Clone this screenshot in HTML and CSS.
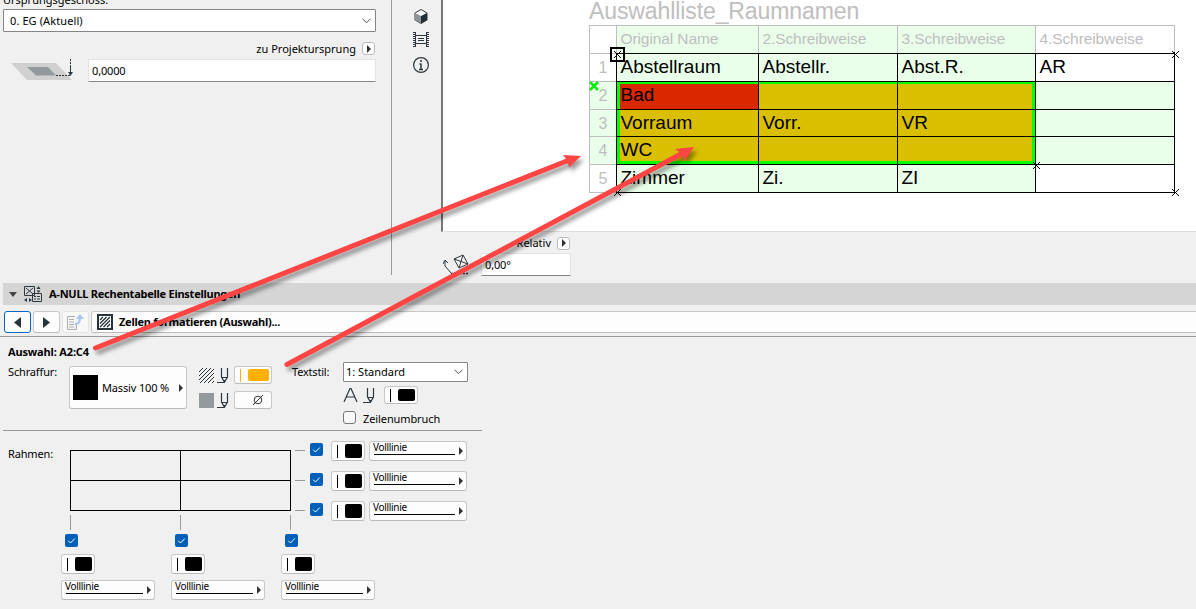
FILE: index.html
```
<!DOCTYPE html>
<html lang="de">
<head>
    <meta charset="UTF-8">
    <meta name="viewport" content="width=device-width, initial-scale=1.0">
    <title>A-NULL Rechentabelle</title>
    <link rel="stylesheet" href="styles.css">
</head>
<body>
    <!-- Shared icons -->
    <svg class="symbols">
        <symbol id="pen" viewBox="0 0 12 17">
            <path d="M4.5 1v9l3 5 3-5V1M4.5 10.500h6M0 15.500h7.500" fill="none" stroke="#2d383e" stroke-width="1.200"/>
            <path d="M6 13h3l-1.500 2.500z" fill="#2d383e"/>
        </symbol>
        <symbol id="check" viewBox="0 0 13 13">
            <path d="M3.200 6.700l2.300 2.300 4.300-4.500" fill="none" stroke="#fff" stroke-width="1"/>
        </symbol>
        <symbol id="chevron" viewBox="0 0 9 6">
            <path d="M.5.700l4 4 4-4" fill="none" stroke="#555" stroke-width="1"/>
        </symbol>
    </svg>

    <div class="top">
        <section class="origin">
            <label class="origin-label">Ursprungsgeschoss:</label>
            <div class="select origin-select"><span>0. EG (Aktuell)</span><svg class="chevron"><use href="#chevron"/></svg></div>
            <div class="origin-link"><span>zu Projektursprung</span><button class="mini"></button></div>
            <div class="origin-height">
                <svg width="64" height="24" viewBox="0 0 64 24">
                    <path d="M0 4h45l16 17H16z" fill="#d0d0d0"/>
                    <path d="M16 8h21l8 8.500H25z" fill="#939a9e"/>
                    <path d="M45 16.500h14M59.500 0v6" stroke="#2d383e" stroke-dasharray="2 1" fill="none"/>
                    <path d="M59.500 6v8" stroke="#2d383e"/>
                    <path d="M57 13h5l-2.500 4z" fill="#2d383e"/>
                </svg>
                <div class="field height-field">0,0000</div>
            </div>
        </section>

        <aside class="tools">
            <svg width="14" height="15" viewBox="0 0 14 15">
                <path d="M7 .5l6 3.500v7l-6 3.500L1 11V4z" fill="#fff" stroke="#2d383e"/>
                <path d="M1 4l6 3v7.500L1 11z" fill="#8d9498"/>
                <path d="M7 7l6-3v7l-6 3.500z" fill="#222f36"/>
            </svg>
            <svg width="16" height="16" viewBox="0 0 16 16">
                <path d="M1 0v15M15 0v15" stroke="#2d383e" stroke-width="2" stroke-dasharray="1 1"/>
                <path d="M2.500 0v15M13.500 0v15M3 3.500h10M3 11.500h10M5 6.500h6M5 8.500h6" stroke="#2d383e"/>
            </svg>
            <svg width="16" height="16" viewBox="0 0 16 16">
                <circle cx="8" cy="8" r="7.400" fill="none" stroke="#2d383e" stroke-width="1.200"/>
                <path d="M8 3v2M8 6.500v6M6.500 7H8M6 12.500h4" stroke="#2d383e" stroke-width="1.500"/>
            </svg>
        </aside>

        <main class="work">
            <div class="sheet">
                <h1>Auswahlliste_Raumnamen</h1>
                <div class="table">
                    <div class="cell num white"></div>
                    <div class="cell head">Original Name</div>
                    <div class="cell head">2.Schreibweise</div>
                    <div class="cell head">3.Schreibweise</div>
                    <div class="cell head white">4.Schreibweise</div>

                    <div class="cell num white">1</div>
                    <div class="cell">Abstellraum</div>
                    <div class="cell">Abstellr.</div>
                    <div class="cell">Abst.R.</div>
                    <div class="cell white">AR</div>

                    <div class="cell num">2</div>
                    <div class="cell red sel-tl">Bad</div>
                    <div class="cell gold sel-t"></div>
                    <div class="cell gold sel-tr"></div>
                    <div class="cell"></div>

                    <div class="cell num">3</div>
                    <div class="cell gold sel-l">Vorraum</div>
                    <div class="cell gold">Vorr.</div>
                    <div class="cell gold sel-r">VR</div>
                    <div class="cell"></div>

                    <div class="cell num">4</div>
                    <div class="cell gold sel-bl">WC</div>
                    <div class="cell gold sel-b"></div>
                    <div class="cell gold sel-br"></div>
                    <div class="cell"></div>

                    <div class="cell num last white">5</div>
                    <div class="cell last">Zimmer</div>
                    <div class="cell last">Zi.</div>
                    <div class="cell last">ZI</div>
                    <div class="cell last white"></div>
                </div>
                <!-- Handles of the selected table -->
                <svg class="handles" width="600" height="170" viewBox="0 0 600 170">
                    <rect x="24" y="19" width="13" height="13" fill="none" stroke="#000" stroke-width="2"/>
                    <path d="M27 22l7 7M34 22l-7 7M27 160l7 7M34 160l-7 7M585 22l7 7M592 22l-7 7M585 160l7 7M592 160l-7 7M446 133l7 7M453 133l-7 7" stroke="#000"/>
                    <rect x="3" y="53" width="8" height="8" fill="#fff"/>
                    <path d="M3 53l8 8M11 53l-8 8" stroke="#0e0" stroke-width="2.500"/>
                </svg>
            </div>
            <div class="rotation">
                <svg width="28" height="23" viewBox="0 0 28 23">
                    <path d="M11 6l9-4 5 9-9 4zM11 6l14 5M20 2l-4 13M2 8v5l6 7M0 11l2-4 3 3" fill="none" stroke="#2d383e"/>
                    <path d="M8 20.500h18" stroke="#2d383e" stroke-width="1.500" stroke-dasharray="2 1"/>
                </svg>
                <div class="rotation-fields">
                    <div class="relative"><span>Relativ</span><button class="mini"></button></div>
                    <div class="field angle">0,00°</div>
                </div>
            </div>
        </main>
    </div>

    <section class="settings">
        <header class="panel-title">
            <svg width="8" height="5" viewBox="0 0 8 5"><path d="M0 0h8L4 5z" fill="#444"/></svg>
            <svg class="panel-icon" width="19" height="17" viewBox="0 0 19 17">
                <path d="M.5.500h10v9H.500zM2 2l7 6M9 2L2 8M8.500 7.500h9v8h-9zM10 10.500h2M13 10.500h3M10 13h2M13 13h3" fill="none" stroke="#2d383e"/>
                <path d="M12.500 3h4l-2-3zM12.500 4.500h4l-2 2.500zM3 12v4l-3-2zM5 12v4l3-2z" fill="#2d383e"/>
            </svg>
            <h2>A-NULL Rechentabelle Einstellungen</h2>
        </header>

        <nav class="pages">
            <button class="btn nav active"><svg width="7" height="11" viewBox="0 0 7 11"><path d="M7 0v11L0 5.500z" fill="#26333a"/></svg></button>
            <button class="btn nav"><svg width="7" height="11" viewBox="0 0 7 11"><path d="M0 0v11l7-5.500z" fill="#26333a"/></svg></button>
            <button class="btn list">
                <svg width="17" height="16" viewBox="0 0 17 16">
                    <path d="M8 2.500H.5v13h9V11M2 5.500h5M2 8h5M2 10.500h5M2 13h5" fill="none" stroke="#a9adb0"/>
                    <path d="M8 10c5 0 5-4 5-8" fill="none" stroke="#a9c6f2" stroke-width="2"/>
                    <path d="M9 5l4-5 4 5z" fill="#a9c6f2"/>
                </svg>
            </button>
            <div class="btn page-name">
                <svg width="16" height="16" viewBox="0 0 16 16">
                    <rect x="1" y="1" width="14" height="14" fill="#fff" stroke="#26333a" stroke-width="2"/>
                    <path d="M3 6l3-3M3 9.500L9.500 3M3 13L13 3M6.500 13L13 6.500M10 13l3-3" stroke="#26333a" stroke-width="1.300"/>
                </svg>
                <strong>Zellen formatieren (Auswahl)...</strong>
            </div>
        </nav>

        <div class="format">
            <strong class="range">Auswahl: A2:C4</strong>
            <div class="format-row">
                <label class="label">Schraffur:</label>
                <button class="btn fill"><i class="swatch"></i><span>Massiv 100 %</span><i class="tri"></i></button>
                <div class="pens">
                    <div class="pen-row">
                        <svg width="15" height="15" viewBox="0 0 15 15"><path d="M0 4l4-4M0 8l8-8M0 12L12 0M1 15L15 1M5 15L15 5M9 15l6-6M13 15l2-2" stroke="#26333a"/></svg>
                        <svg class="pen"><use href="#pen"/></svg>
                        <button class="btn color wide orange"><i></i><b></b></button>
                    </div>
                    <div class="pen-row">
                        <i class="gray"></i>
                        <svg class="pen"><use href="#pen"/></svg>
                        <button class="btn color wide none"><svg width="12" height="12" viewBox="0 0 12 12"><circle cx="6" cy="6" r="3.800" fill="none" stroke="#333"/><path d="M1 11L11 1" stroke="#333"/></svg></button>
                    </div>
                </div>
                <label class="label text-label">Textstil:</label>
                <div class="text-style">
                    <div class="select"><span>1: Standard</span><svg class="chevron"><use href="#chevron"/></svg></div>
                    <div class="text-pen">
                        <svg width="15" height="14" viewBox="0 0 15 14"><path d="M1 14L7 .5h1L14 14M3.500 9h8" fill="none" stroke="#2d383e" stroke-width="1.200"/></svg>
                        <svg class="pen"><use href="#pen"/></svg>
                        <button class="btn color"><i></i><b></b></button>
                    </div>
                    <div class="wrap"><i class="box"></i><span>Zeilenumbruch</span></div>
                </div>
            </div>
        </div>

        <div class="borders">
            <label class="label">Rahmen:</label>
            <div class="border-grid">
                <div class="preview"><i></i><i></i><i></i><i></i></div>
                <div class="side">
                    <div class="side-row"><i class="tick"></i><svg class="checked"><use href="#check"/></svg><button class="btn color"><i></i><b></b></button><button class="btn line"><span>Volllinie</span><i class="tri"></i></button></div>
                    <div class="side-row"><i class="tick"></i><svg class="checked"><use href="#check"/></svg><button class="btn color"><i></i><b></b></button><button class="btn line"><span>Volllinie</span><i class="tri"></i></button></div>
                    <div class="side-row"><i class="tick"></i><svg class="checked"><use href="#check"/></svg><button class="btn color"><i></i><b></b></button><button class="btn line"><span>Volllinie</span><i class="tri"></i></button></div>
                </div>
                <div class="bottom">
                    <div class="bottom-col"><i class="tick"></i><svg class="checked"><use href="#check"/></svg><button class="btn color"><i></i><b></b></button><button class="btn line"><span>Volllinie</span><i class="tri"></i></button></div>
                    <div class="bottom-col"><i class="tick"></i><svg class="checked"><use href="#check"/></svg><button class="btn color"><i></i><b></b></button><button class="btn line"><span>Volllinie</span><i class="tri"></i></button></div>
                    <div class="bottom-col"><i class="tick"></i><svg class="checked"><use href="#check"/></svg><button class="btn color"><i></i><b></b></button><button class="btn line"><span>Volllinie</span><i class="tri"></i></button></div>
                </div>
            </div>
        </div>
    </section>

    <!-- Callout arrows -->
    <svg class="arrows" width="1196" height="609" viewBox="0 0 1196 609">
        <g stroke="#ff4444" stroke-width="5" stroke-linecap="round" fill="#ff4444">
            <path d="M95.500 348L568 160.500"/>
            <path d="M287 364.500L681 154"/>
            <path d="M581 156l-12 11.500-1.500-7-4.500-5.500z" stroke="none"/>
            <path d="M694 147l-9.500 13.500-3-7-6.500-4.500z" stroke="none"/>
        </g>
    </svg>
</body>
</html>
```
FILE: styles.css
```
* {
    margin: 0;
    padding: 0;
    box-sizing: border-box;
}

body {
    width: 1196px;
    height: 609px;
    overflow: hidden;
    position: relative;
    background: #f0f0f0;
    color: #000;
    font: 11px/14px "Noto Sans", "Open Sans", sans-serif;
    letter-spacing: -0.15px;
}

button {
    font: inherit;
    letter-spacing: inherit;
    color: inherit;
}

svg, i, b {
    display: block;
    flex: none;
}

span, strong, h1, h2 {
    white-space: nowrap;
}

.symbols {
    position: absolute;
    width: 0;
    height: 0;
}

.top {
    display: flex;
    height: 283px;
}

/* Origin storey */

.origin {
    width: 392px;
    height: 275px;
    border-right: 1px solid #999;
}

.origin-label {
    display: block;
    height: 9px;
    margin-left: 3px;
    line-height: 0;
    letter-spacing: 0;
}

.select {
    display: flex;
    align-items: center;
    justify-content: space-between;
    height: 20px;
    padding: 0 4px 0 2px;
    background: #fff;
    border: 1px solid #868686;
    border-radius: 1px;
}

.origin-select {
    width: 373px;
    height: 23px;
    margin-left: 3px;
    padding-left: 6px;
    letter-spacing: 0.1px;
}

.chevron {
    width: 9px;
    height: 6px;
}

.origin-link {
    display: flex;
    justify-content: flex-end;
    align-items: center;
    gap: 6px;
    width: 375px;
    height: 13px;
    margin-top: 10px;
    letter-spacing: 0;
}

.mini {
    width: 13px;
    height: 13px;
    background: #fff;
    border: 1px solid #bbb;
    border-radius: 3px;
    display: flex;
    align-items: center;
    justify-content: center;
}

.mini::before, .tri {
    content: "";
    border-left: 4px solid #333;
    border-top: 4px solid transparent;
    border-bottom: 4px solid transparent;
}

.origin-height {
    display: flex;
    gap: 13px;
    margin: 4px 0 0 11px;
}

.field {
    height: 23px;
    padding: 4px 3px;
    background: #fff;
    border: 1px solid #e3e3e3;
    border-bottom-color: #868686;
    border-radius: 1px;
}

.height-field {
    width: 288px;
    letter-spacing: -0.15px;
}

/* Toolbar */

.tools {
    width: 49px;
    display: flex;
    flex-direction: column;
    align-items: center;
    gap: 8px;
    padding: 9px 0 0 9px;
}

.tools svg:last-child {
    margin-top: 1px;
}

/* Worksheet */

.work {
    width: 755px;
}

.sheet {
    position: relative;
    height: 232px;
    padding-left: 146px;
    background: #fff;
    border-left: 2px solid #777;
    border-bottom: 1px solid #ddd;
    font-family: "Liberation Sans", Arial, sans-serif;
    letter-spacing: 0;
}

.sheet h1 {
    height: 25px;
    color: #bebebe;
    font-size: 23px;
    line-height: 23px;
    font-weight: 400;
    letter-spacing: -0.1px;
}

.table {
    display: grid;
    grid-template-columns: 27px 142px 139px 138px 139px;
    grid-template-rows: 28px 28px 28px 27px 28px 29px;
    width: 586px;
    border: solid;
    border-width: 0 1px 0 0;
    border-image: linear-gradient(#bebebe 28px, #000 28px) 1;
}

.cell {
    padding-left: 3.5px;
    background: #eaffea;
    border-top: 1px solid #000;
    border-left: 1px solid #000;
    font-size: 19px;
    line-height: 26px;
    letter-spacing: 0;
}

.cell.last {
    border-bottom: 1px solid #000;
}

.cell.white {
    background: #fff;
}

.cell.head, .cell.num {
    border-color: #bebebe;
    color: #bebebe;
}

.cell.head {
    font-size: 15.5px;
    line-height: 26px;
    letter-spacing: -0.1px;
}

.cell.num {
    padding: 0;
    text-align: center;
    font-size: 16px;
    line-height: 27px;
}

.cell.red { background: #d92800; }
.cell.gold { background: #d9bf00; }

.sel-t { box-shadow: inset 0 2px #0f0; }
.sel-l { box-shadow: inset 3px 0 #0f0; }
.sel-r { box-shadow: inset -3px 0 #0f0; }
.sel-b { box-shadow: inset 0 -3px #0f0; }
.sel-tl { box-shadow: inset 3px 2px #0f0; }
.sel-tr { box-shadow: inset -3px 2px #0f0; }
.sel-bl { box-shadow: inset 3px -3px #0f0; }
.sel-br { box-shadow: inset -3px -3px #0f0; }

.handles {
    position: absolute;
    left: 144px;
    top: 29px;
}

.rotation {
    display: flex;
    align-items: flex-end;
    gap: 10px;
    height: 44px;
    padding-left: 2px;
}

.rotation-fields {
    width: 90px;
}

.relative {
    display: flex;
    align-items: center;
    justify-content: flex-end;
    gap: 6px;
    margin-bottom: 3px;
    padding-right: 1px;
    letter-spacing: 0;
}

/* Settings panel */

.panel-title {
    display: flex;
    align-items: center;
    height: 22px;
    margin-left: 3px;
    padding-left: 6px;
    background: #d5d5d5;
}

.panel-icon {
    margin: 0 6px 0 7px;
}

.panel-title h2 {
    font-size: 11px;
    letter-spacing: -0.25px;
}

.btn {
    display: flex;
    align-items: center;
    background: #fdfdfd;
    border: 1px solid #c8c8c8;
    border-bottom-color: #bbb;
    border-radius: 3px;
}

.pages {
    display: flex;
    gap: 2px;
    height: 32px;
    padding: 6px 0 3px 4px;
    border-bottom: 1px solid #999;
    overflow: hidden;
}

.pages .btn {
    height: 22px;
}

.nav, .list {
    width: 27px;
    justify-content: center;
}

.nav.active {
    border-color: #0067c0;
}

.list {
    background: #f8f8f8;
    border-color: #e5e5e5;
}

.page-name {
    flex: 1;
    gap: 6px;
    margin-right: -4px;
    padding-left: 5px;
    letter-spacing: -0.25px;
}

.format {
    width: 479px;
    height: 94px;
    margin-left: 3px;
    padding: 8px 0 0 5px;
    border-bottom: 1px solid #999;
}

.range {
    display: block;
    height: 17px;
    letter-spacing: -0.15px;
}

.format-row {
    display: flex;
    align-items: flex-start;
}

.label {
    width: 61px;
    padding-top: 3px;
}

.fill {
    width: 118px;
    height: 43px;
    margin-top: 4px;
    padding: 0 3px;
}

.swatch {
    width: 25px;
    height: 25px;
    margin-right: 4px;
    background: #000;
}

.fill .tri {
    margin-left: auto;
}

.pens {
    margin: 4px 0 0 12px;
}

.pen-row {
    display: flex;
    align-items: center;
    height: 18px;
    margin-bottom: 7px;
}

.pen {
    width: 12px;
    height: 17px;
    margin: 0 5px 0 3px;
}

.gray {
    width: 15px;
    height: 15px;
    background: #939a9e;
}

.color {
    width: 34px;
    height: 20px;
    padding: 0 2px 0 5px;
    justify-content: space-between;
}

.color i {
    width: 1px;
    height: 13px;
    background: #000;
}

.color b {
    width: 17px;
    height: 14px;
    background: #000;
    border-radius: 2px;
}

.color.wide {
    width: 38px;
    height: 18px;
}

.orange i, .orange b {
    background: #ffb000;
}

.orange b {
    width: 21px;
    height: 12px;
}

.color.none {
    padding-left: 17px;
}

.text-label {
    width: 51px;
    margin-left: 20px;
    letter-spacing: -0.2px;
}

.text-style {
    width: 125px;
}

.text-style .select {
    letter-spacing: 0;
}

.text-pen {
    display: flex;
    align-items: center;
    height: 18px;
    margin-top: 4px;
}

.text-pen .pen {
    margin: 0 9px 0 5px;
}

.text-pen .color {
    height: 18px;
}

.text-pen .color b {
    height: 12px;
}

.wrap {
    display: flex;
    align-items: center;
    gap: 7px;
    height: 14px;
    margin-top: 8px;
    letter-spacing: -0.1px;
}

.box {
    width: 13px;
    height: 13px;
    margin-top: -3px;
    background: #f8f8f8;
    border: 1px solid #777;
    border-radius: 3px;
}

/* Borders */

.borders {
    display: flex;
    padding: 10px 0 0 8px;
}

.borders .label {
    width: 53px;
    padding-top: 6px;
    letter-spacing: -0.15px;
}

.border-grid {
    display: grid;
    grid-template-columns: 234px 172px;
    grid-template-rows: 74px auto;
}

.preview {
    display: grid;
    grid-template-columns: 110px 110px;
    grid-template-rows: 30px 30px;
    width: 221px;
    height: 61px;
    margin: 9px 0 0 9px;
    border: solid #000;
    border-width: 0 1px 1px 0;
}

.preview i {
    border: solid #000;
    border-width: 1px 0 0 1px;
}

.side-row {
    display: flex;
    align-items: center;
    height: 20px;
    margin-bottom: 10px;
}

.tick {
    background: #999;
}

.side .tick {
    width: 10px;
    height: 1px;
    margin: -1px 5px 0 0;
}

.checked {
    width: 13px;
    height: 13px;
    background: #005fb8;
    border-radius: 2px;
}

.side .checked {
    margin: -3px 8px 0 0;
}

.side .line {
    width: 98px;
    margin-left: 4px;
}

.line {
    justify-content: space-between;
    width: 94px;
    height: 20px;
    padding: 0 3px 0 4px;
    font-size: 10px;
    line-height: 11px;
    text-align: left;
}

.line span {
    flex: 1;
    align-self: flex-start;
    height: 13px;
    margin-right: 4px;
    border-bottom: 1px solid #000;
    letter-spacing: -0.3px;
    text-indent: -1px;
}

.bottom {
    display: flex;
    gap: 16px;
}

.bottom .tick {
    width: 1px;
    height: 15px;
    margin-left: 9px;
}

.bottom .checked {
    margin: 4px 0 7px 4px;
}

.bottom .line {
    margin-top: 6px;
}

.arrows {
    position: absolute;
    left: 0;
    top: 0;
    pointer-events: none;
    filter: drop-shadow(3px 4px 2px rgba(0, 0, 0, 0.4));
}
```
